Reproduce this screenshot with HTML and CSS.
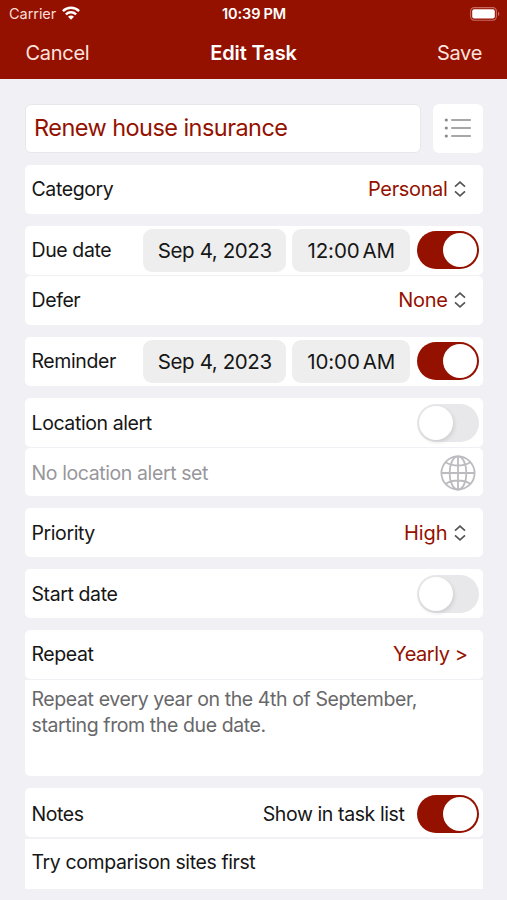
FILE: index.html
```html
<!DOCTYPE html>
<html lang="en">
<head>
<meta charset="utf-8">
<title>Edit Task</title>
<link rel="stylesheet" href="styles.css">
</head>
<body>
<svg width="0" height="0" class="defs">
  <symbol id="updown" viewBox="0 0 12 16"><path d="M1 5.6 6 1.2l5 4.4M1 10.4 6 14.8l5-4.4" fill="none" stroke="currentColor" stroke-width="1.7"/></symbol>
</svg>
<header class="header">
  <div class="status">
    <div class="carrier"><span>Carrier</span>
      <svg class="wifi" viewBox="0 0 18 14" width="18" height="14"><g fill="none" stroke="#fff" stroke-width="2.4"><path d="M.9 5.1C5.4.6 12.6.6 17.1 5.1"/><path d="M3.9 8.3c2.9-2.8 7.3-2.8 10.2 0"/></g><path d="M9 13.8 6 10.8c1.7-1.6 4.3-1.6 6 0z" fill="#fff"/></svg>
    </div>
    <div class="clock">10:39<i></i>PM</div>
    <svg class="battery" viewBox="0 0 30 14" width="30" height="14"><rect x=".6" y=".6" width="25.8" height="12.6" rx="3.6" fill="none" stroke="#c96a60" stroke-width="1.1"/><rect x="2.2" y="2.2" width="22.6" height="9.4" rx="2" fill="#fff"/><path d="M28 4.8c1.8.6 1.8 3.6 0 4.2z" fill="#c96a60"/></svg>
  </div>
  <nav class="nav">
    <span class="cancel">Cancel</span>
    <h1>Edit Task</h1>
    <span class="save">Save</span>
  </nav>
</header>
<main class="form">
  <div class="title-row">
    <div class="title-field"><span>Renew house insurance</span></div>
    <div class="list-button">
      <svg viewBox="0 0 28 20" width="28" height="20"><g fill="#8a8a8c"><circle cx="2.3" cy="2" r="1.6"/><circle cx="2.3" cy="10" r="1.6"/><circle cx="2.3" cy="18" r="1.6"/></g><path d="M7.8 2h18.5M7.8 10h18.5M7.8 18h18.5" stroke="#8a8a8c" stroke-width="1.6" stroke-linecap="round"/></svg>
    </div>
  </div>

  <section class="group">
    <div class="row"><span class="label">Category</span><span class="value">Personal</span><svg class="updown"><use href="#updown"/></svg></div>
  </section>

  <section class="group">
    <div class="row"><span class="label">Due date</span><span class="pill date"><span>Sep 4, 2023</span></span><span class="pill time"><span>12:00<i></i>AM</span></span><span class="switch on"></span></div>
    <div class="row"><span class="label">Defer</span><span class="value">None</span><svg class="updown"><use href="#updown"/></svg></div>
  </section>

  <section class="group">
    <div class="row"><span class="label">Reminder</span><span class="pill date"><span>Sep 4, 2023</span></span><span class="pill time"><span>10:00<i></i>AM</span></span><span class="switch on"></span></div>
  </section>

  <section class="group location">
    <div class="row"><span class="label">Location alert</span><span class="switch"></span></div>
    <div class="row"><span class="label muted">No location alert set</span>
      <svg class="globe" viewBox="0 0 36 36" width="36" height="36"><g fill="none" stroke="#bcbcc0" stroke-width="1.8"><circle cx="18" cy="18" r="16.6"/><ellipse cx="18" cy="18" rx="8.4" ry="16.6"/><path d="M18 1.4v33.2M1.4 18h33.2M5.6 7.2c7 4.4 17.8 4.4 24.8 0M5.6 28.8c7-4.4 17.8-4.4 24.8 0"/></g></svg>
    </div>
  </section>

  <section class="group">
    <div class="row"><span class="label">Priority</span><span class="value high">High</span><svg class="updown"><use href="#updown"/></svg></div>
  </section>

  <section class="group">
    <div class="row"><span class="label">Start date</span><span class="switch"></span></div>
  </section>

  <section class="group repeat">
    <div class="row"><span class="label">Repeat</span><span class="value yearly">Yearly &gt;</span></div>
    <div class="summary">Repeat every year on the 4th of September,<br>starting from the due date.</div>
  </section>

  <section class="group notes">
    <div class="row"><span class="label">Notes</span><span class="show">Show in task list</span><span class="switch on"></span></div>
    <div class="row note"><span class="label">Try comparison sites first</span></div>
  </section>
</main>
</body>
</html>
```

FILE: styles.css
```css
* { box-sizing: border-box; }
body {
  margin: 0;
  height: 900px;
  overflow: hidden;
  background: #f0f0f5;
  color: #161616;
  font-family: Inter, "Liberation Sans", sans-serif;
  font-size: 19.5px;
  letter-spacing: -0.4px;
  line-height: 26px;
  white-space: nowrap;
}
.defs { display: block; }
.header { height: 79px; background: #941100; color: #fff; }
.status {
  display: grid;
  grid-template-columns: 1fr auto 1fr;
  align-items: center;
  height: 27px;
  padding: 0 7px 0 9px;
  font-size: 14.5px;
  letter-spacing: -0.05px;
  line-height: 20px;
}
.carrier { display: flex; align-items: center; gap: 6px; color: #fbdcd6; }
.wifi { margin-top: -2px; }
.clock { font-weight: 600; margin-right: 1px; }
.clock i { display: inline-block; width: 3px; }
.battery { justify-self: end; }
.nav {
  display: grid;
  grid-template-columns: 1fr auto 1fr;
  align-items: center;
  height: 51px;
  padding: 0 25px;
  font-size: 20px;
  letter-spacing: -0.3px;
}
.nav h1 { margin: 0; font-size: 20px; font-weight: 600; letter-spacing: -0.1px; }
.cancel, .save { color: #ffe3de; }
.cancel { padding-left: 0.5px; }
.save { justify-self: end; }
.form {
  display: flex;
  flex-direction: column;
  gap: 12px;
  padding: 25px 24.5px 0 25px;
}
.title-row { display: flex; gap: 12px; height: 48.5px; }
.title-field {
  flex: 1;
  display: flex;
  align-items: center;
  padding-left: 8px;
  background: #fff;
  border: 1px solid #e7e7ec;
  border-radius: 6px;
  color: #941100;
  font-size: 23.5px;
  letter-spacing: -0.55px;
}
.list-button {
  display: grid;
  place-items: center;
  width: 50px;
  background: #fff;
  border-radius: 6px;
}
.group { display: flex; flex-direction: column; gap: 1.3px; }
.row {
  display: flex;
  align-items: center;
  height: 49px;
  padding: 0 4px 0 6.5px;
  background: #fff;
  border-radius: 5px;
}
.label { margin-right: auto; }
.value { color: #941100; font-size: 20px; letter-spacing: -0.35px; }
.high { letter-spacing: -0.1px; }
.updown { width: 12px; height: 16px; margin: 0 13px 0 6px; color: #555; }
.pill {
  display: grid;
  place-items: center;
  height: 43px;
  border-radius: 9px;
  background: #eee;
  font-size: 20.5px;
  letter-spacing: -0.4px;
}
.pill span { padding: 1px 0 0 1.5px; }
.date { width: 143px; margin-right: 6px; }
.time { width: 118px; margin-right: 7px; letter-spacing: -0.1px; }
.time i { display: inline-block; width: 3px; }
.switch {
  display: flex;
  width: 62px;
  height: 38px;
  padding: 2px;
  border-radius: 19px;
  background: #e8e8ea;
}
.switch::before {
  content: "";
  width: 34px;
  height: 34px;
  border-radius: 50%;
  background: #fff;
  box-shadow: 1px 2px 4px rgba(0, 0, 0, .12);
}
.switch.on { justify-content: flex-end; background: #941100; }
.switch.on::before { box-shadow: none; }
.location .row:first-child { padding-top: 1px; }
.location .row + .row { height: 48px; padding-top: 1px; }
.muted { color: #97979b; }
.globe { margin-right: 2.5px; }
.yearly { margin-right: 11px; letter-spacing: -0.45px; }
.summary {
  height: 96px;
  padding: 5.5px 6.5px;
  background: #fff;
  border-radius: 0 0 5px 5px;
  color: #68686a;
}
.repeat .row { padding-bottom: 1px; }
.notes .row:first-child { padding-top: 2px; }
.show { margin-right: 12px; }
.note { border-radius: 0; padding-bottom: 4px; height: 50px; }
```
